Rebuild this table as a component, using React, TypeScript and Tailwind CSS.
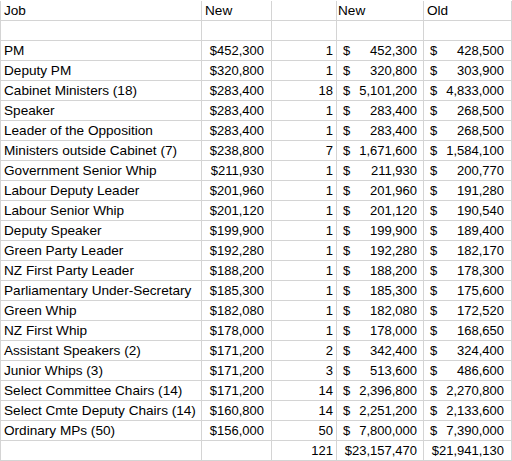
import React from 'react';

type Row = {
  job: string;
  salary: string;
  count: string;
  total: string;
  old: string;
};

const ROWS: Row[] = [
  { job: 'PM', salary: '$452,300', count: '1', total: '452,300', old: '428,500' },
  { job: 'Deputy PM', salary: '$320,800', count: '1', total: '320,800', old: '303,900' },
  { job: 'Cabinet Ministers (18)', salary: '$283,400', count: '18', total: '5,101,200', old: '4,833,000' },
  { job: 'Speaker', salary: '$283,400', count: '1', total: '283,400', old: '268,500' },
  { job: 'Leader of the Opposition', salary: '$283,400', count: '1', total: '283,400', old: '268,500' },
  { job: 'Ministers outside Cabinet (7)', salary: '$238,800', count: '7', total: '1,671,600', old: '1,584,100' },
  { job: 'Government Senior Whip', salary: '$211,930', count: '1', total: '211,930', old: '200,770' },
  { job: 'Labour Deputy Leader', salary: '$201,960', count: '1', total: '201,960', old: '191,280' },
  { job: 'Labour Senior Whip', salary: '$201,120', count: '1', total: '201,120', old: '190,540' },
  { job: 'Deputy Speaker', salary: '$199,900', count: '1', total: '199,900', old: '189,400' },
  { job: 'Green Party Leader', salary: '$192,280', count: '1', total: '192,280', old: '182,170' },
  { job: 'NZ First Party Leader', salary: '$188,200', count: '1', total: '188,200', old: '178,300' },
  { job: 'Parliamentary Under-Secretary', salary: '$185,300', count: '1', total: '185,300', old: '175,600' },
  { job: 'Green Whip', salary: '$182,080', count: '1', total: '182,080', old: '172,520' },
  { job: 'NZ First Whip', salary: '$178,000', count: '1', total: '178,000', old: '168,650' },
  { job: 'Assistant Speakers (2)', salary: '$171,200', count: '2', total: '342,400', old: '324,400' },
  { job: 'Junior Whips (3)', salary: '$171,200', count: '3', total: '513,600', old: '486,600' },
  { job: 'Select Committee Chairs (14)', salary: '$171,200', count: '14', total: '2,396,800', old: '2,270,800' },
  { job: 'Select Cmte Deputy Chairs (14)', salary: '$160,800', count: '14', total: '2,251,200', old: '2,133,600' },
  { job: 'Ordinary MPs (50)', salary: '$156,000', count: '50', total: '7,800,000', old: '7,390,000' }
];

const COLS = 'grid grid-cols-[201px_70px_65px_87px_88px]';
const CELL = 'flex h-[20px] items-center border-b border-r border-[#d4d4d4] pt-px whitespace-nowrap';
const LABEL = 'pl-[3px] text-[13.6px]';

const Money = ({ value, padRight }: { value: string; padRight: string }) => (
  <div className={`${CELL} justify-between pl-[6px] ${padRight}`}>
    <span>$</span>
    <span>{value}</span>
  </div>
);

export default function App() {
  return (
    <div
      className="h-[461px] w-[512px] overflow-hidden bg-white pt-px text-[13px] text-black"
      style={{ fontFamily: '"Liberation Sans", Arial, sans-serif' }}
    >
      <div className="border-l border-[#d4d4d4]">
        <div className={COLS}>
          <div className={`${CELL} ${LABEL}`}>Job</div>
          <div className={`${CELL} ${LABEL}`}>New</div>
          <div className={CELL} />
          <div className={`${CELL} pl-px text-[13.6px]`}>New</div>
          <div className={`${CELL} ${LABEL}`}>Old</div>
        </div>
        <div className={COLS}>
          <div className={CELL} />
          <div className={CELL} />
          <div className={CELL} />
          <div className={CELL} />
          <div className={CELL} />
        </div>
        {ROWS.map((row) => (
          <div key={row.job} className={COLS}>
            <div className={`${CELL} ${LABEL}`}>{row.job}</div>
            <div className={`${CELL} justify-end pr-[7px]`}>{row.salary}</div>
            <div className={`${CELL} justify-end pr-[3px]`}>{row.count}</div>
            <Money value={row.total} padRight="pr-[6px]" />
            <Money value={row.old} padRight="pr-[7px]" />
          </div>
        ))}
        <div className={COLS}>
          <div className={CELL} />
          <div className={CELL} />
          <div className={`${CELL} justify-end pr-[3px]`}>121</div>
          <div className={`${CELL} justify-end pr-[6px]`}>$23,157,470</div>
          <div className={`${CELL} justify-end pr-[7px]`}>$21,941,130</div>
        </div>
      </div>
    </div>
  );
}
